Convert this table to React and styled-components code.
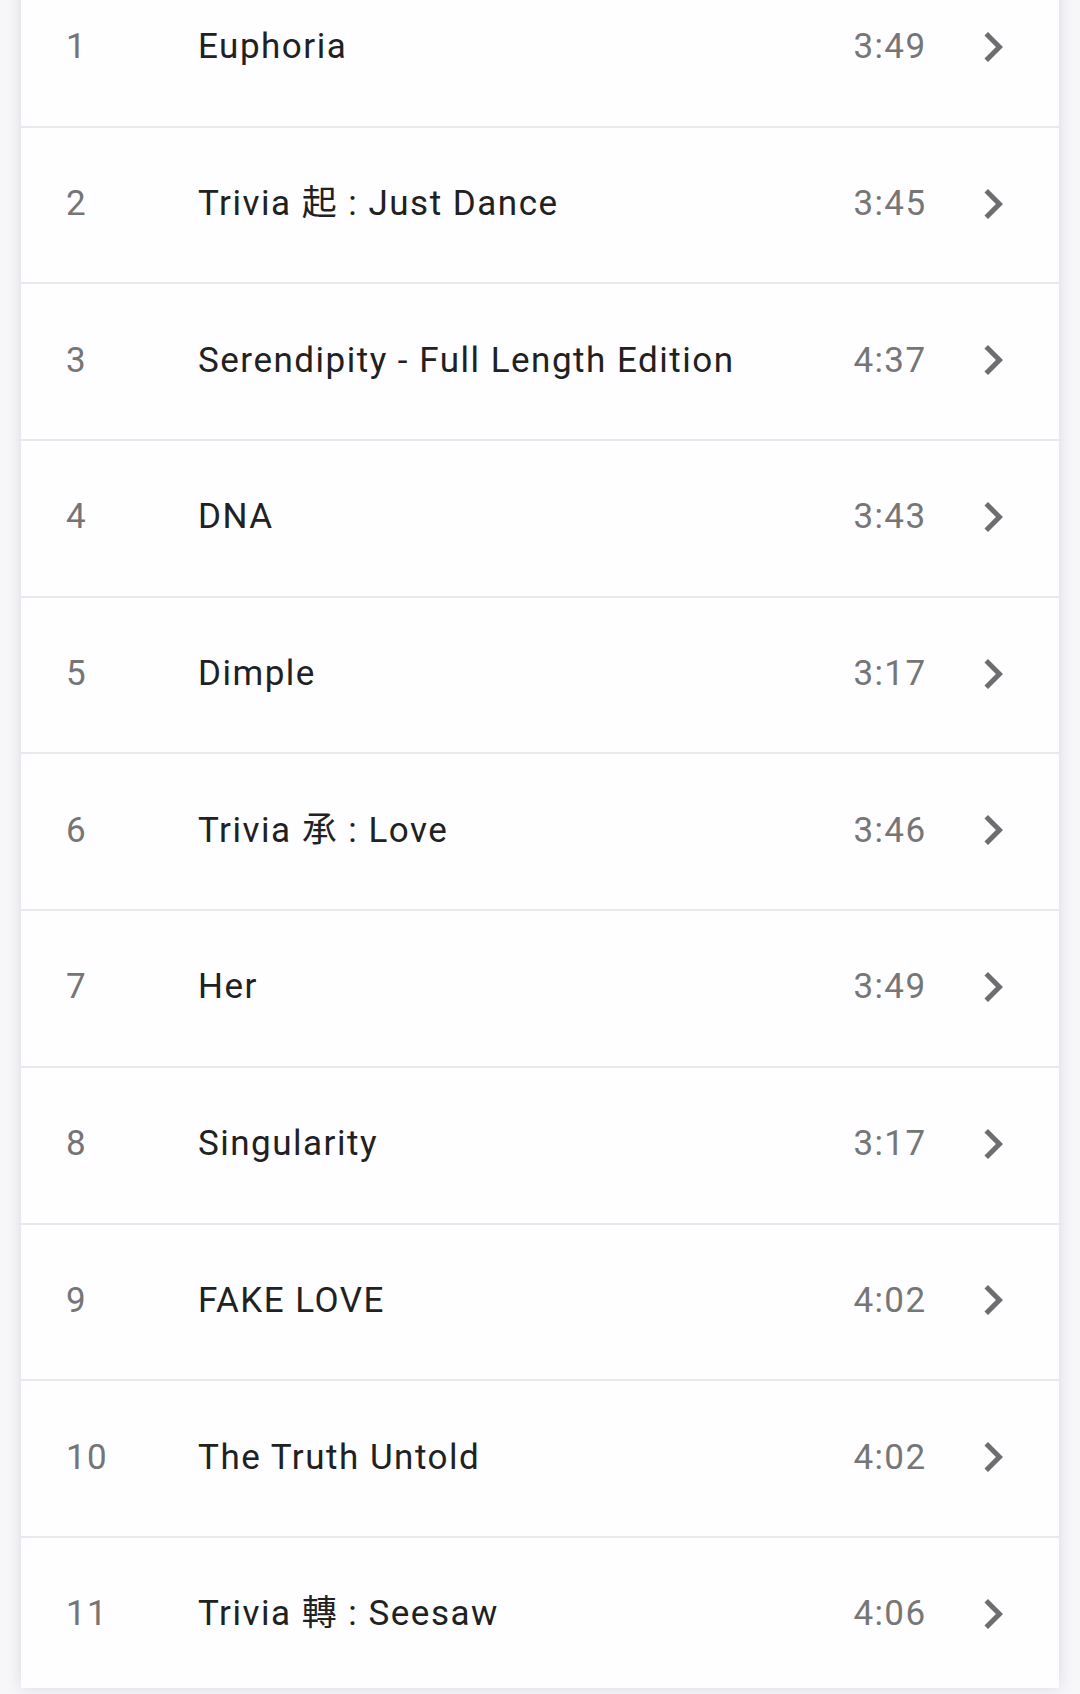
import React from "react";
import styled, { createGlobalStyle } from "styled-components";

const Global = createGlobalStyle`
  html, body {
    margin: 0;
    padding: 0;
    background: #f7f6f9;
    overflow: hidden;
  }
  body {
    font-family: Roboto, "Noto Sans CJK TC", "Noto Sans", sans-serif;
  }
`;

const Page = styled.div`
  height: 1694px;
  overflow: hidden;
  display: flex;
  flex-direction: column;
  background: #f7f6f9;
`;

const Card = styled.div`
  margin: -29px 21px 0 21px;
  height: 1717px;
  flex: none;
  background: #fefdff;
  box-shadow: 0 0 14px rgba(40, 30, 60, 0.13);
  overflow: hidden;
  display: flex;
  flex-direction: column;
`;

const Row = styled.div`
  flex: none;
  box-sizing: border-box;
  height: 156.7px;
  display: flex;
  align-items: center;
  padding: 0 36px 3px 45px;
  border-bottom: 2px solid ${(p) => (p.$last ? "transparent" : "#e9e8eb")};
  font-size: 35px;
  line-height: 41px;
`;

const Num = styled.div`
  width: 132px;
  flex: none;
  letter-spacing: 1.4px;
  color: #757575;
`;

const Title = styled.div`
  flex: 1;
  letter-spacing: 1.5px;
  color: #212121;
  white-space: nowrap;
`;

const Duration = styled.div`
  letter-spacing: 1.4px;
  color: #767676;
  margin-right: 36.5px;
`;

const Chevron = styled.svg`
  width: 60px;
  height: 60px;
  flex: none;
  fill: #6e6e6e;
`;

const tracks = [
  ["1", "Euphoria", "3:49"],
  ["2", "Trivia 起 : Just Dance", "3:45"],
  ["3", "Serendipity - Full Length Edition", "4:37"],
  ["4", "DNA", "3:43"],
  ["5", "Dimple", "3:17"],
  ["6", "Trivia 承 : Love", "3:46"],
  ["7", "Her", "3:49"],
  ["8", "Singularity", "3:17"],
  ["9", "FAKE LOVE", "4:02"],
  ["10", "The Truth Untold", "4:02"],
  ["11", "Trivia 轉 : Seesaw", "4:06"],
];

export default function App() {
  return (
    <>
      <Global />
      <Page>
        <Card>
          {tracks.map(([n, t, d], i) => (
            <Row key={n} $last={i === tracks.length - 1}>
              <Num>{n}</Num>
              <Title>{t}</Title>
              <Duration>{d}</Duration>
              <Chevron viewBox="0 0 24 24">
                <path d="M10 6L8.59 7.41 13.17 12l-4.58 4.59L10 18l6-6z" />
              </Chevron>
            </Row>
          ))}
        </Card>
      </Page>
    </>
  );
}
